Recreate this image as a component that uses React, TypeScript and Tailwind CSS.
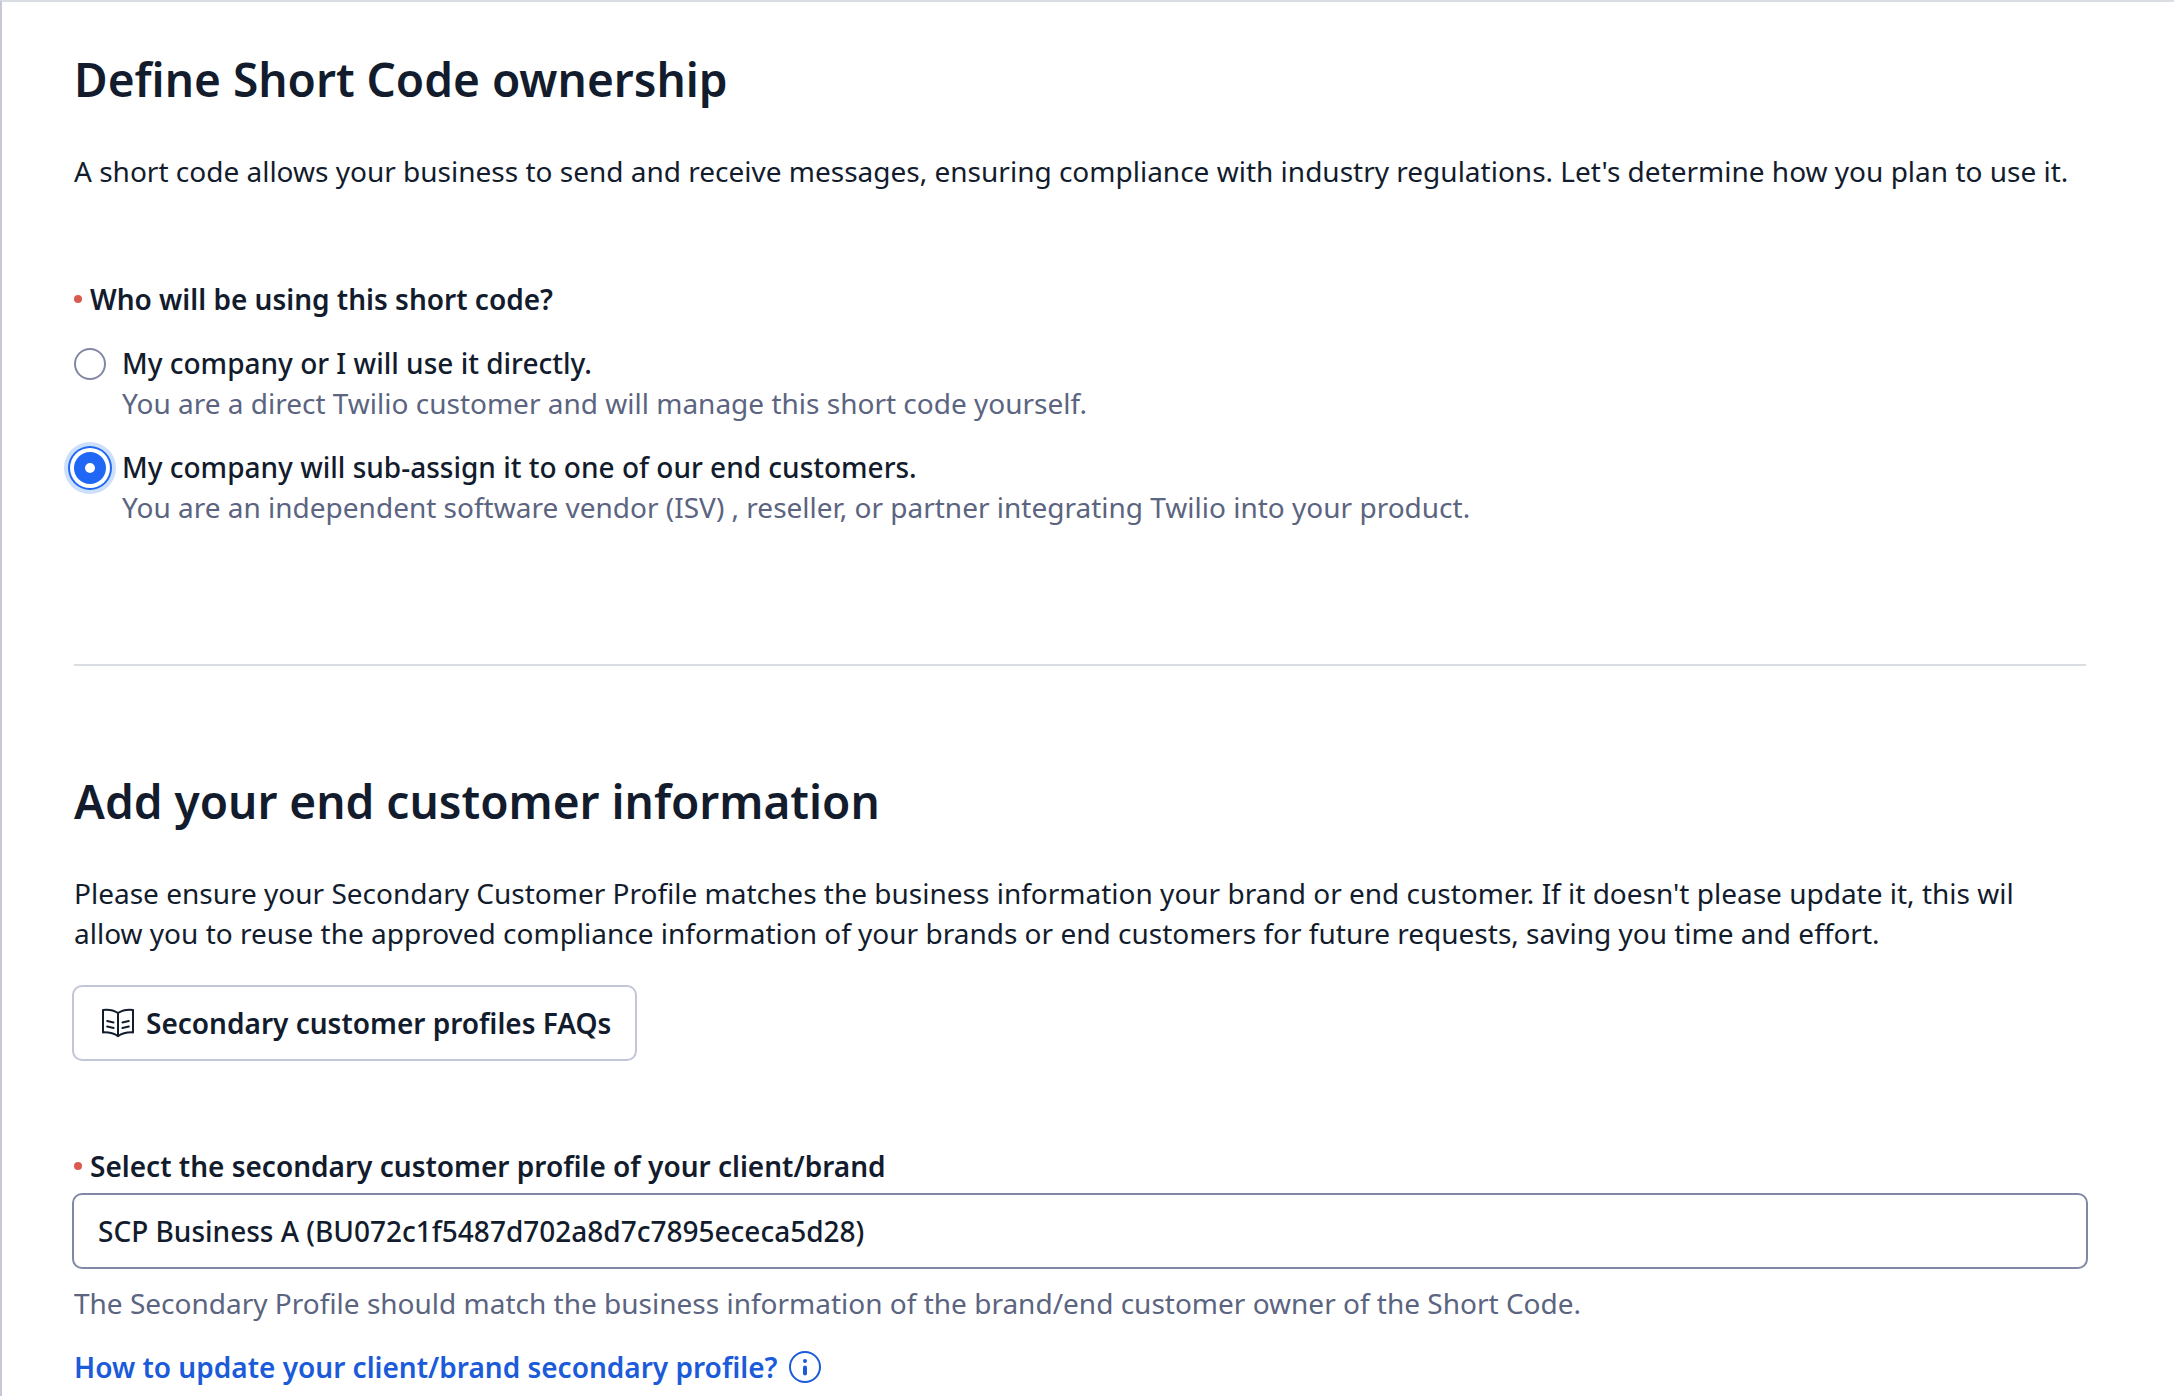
import { useState } from "react";
import type { ReactNode } from "react";

const owners = [
  {
    id: "direct",
    label: "My company or I will use it directly.",
    help: "You are a direct Twilio customer and will manage this short code yourself.",
  },
  {
    id: "isv",
    label: "My company will sub-assign it to one of our end customers.",
    help: "You are an independent software vendor (ISV) , reseller, or partner integrating Twilio into your product.",
  },
];

function RequiredDot() {
  return <span className="size-2 shrink-0 rounded-full bg-[#db5a4f]" />;
}

function Heading({ children }: { children: ReactNode }) {
  return (
    <h2 className="text-[46px] leading-[64px] font-semibold">{children}</h2>
  );
}

function BookIcon() {
  return (
    <svg
      className="size-10"
      viewBox="0 0 20 20"
      fill="none"
      stroke="currentColor"
      strokeLinecap="round"
      strokeLinejoin="round"
      aria-hidden="true"
    >
      <path d="M10 5C7.800 3.600 5 3.200 2.500 3.500v11.200c2.600-.1 5.300.3 7.500 1.900 2.200-1.600 4.900-2 7.500-1.900V3.500C15 3.200 12.200 3.600 10 5zM10 5v11.600" />
      <path d="M4.600 9l3.200.7M4.600 11.800l3.200.7M15.400 9l-3.200.7M15.400 11.800l-3.200.7" />
    </svg>
  );
}

function InfoIcon() {
  return (
    <svg className="size-8" viewBox="0 0 32 32" fill="none" aria-hidden="true">
      <circle cx="16" cy="16" r="15" stroke="currentColor" strokeWidth="2" />
      <circle cx="16" cy="10" r="2" fill="currentColor" />
      <path
        d="M16 16.500v6"
        stroke="currentColor"
        strokeWidth="4"
        strokeLinecap="round"
      />
    </svg>
  );
}

export default function App() {
  const [owner, setOwner] = useState("isv");

  return (
    <main className="min-h-screen border-t-2 border-l-2 border-t-[#dadde2] border-l-[#c6c8d8] bg-white pt-[45px] pr-[88px] pb-2 pl-[72px] font-['Noto_Sans',sans-serif] text-[28px] leading-[40px] text-[#121c2d]">
      <section>
        <Heading>Define Short Code ownership</Heading>
        <p className="mt-10">
          A short code allows your business to send and receive messages,
          ensuring compliance with industry regulations. Let's determine how you
          plan to use it.
        </p>

        <fieldset className="mt-[88px]">
          <legend className="flex items-center gap-2 font-semibold">
            <RequiredDot />
            Who will be using this short code?
          </legend>
          <div className="mt-6 flex flex-col gap-6">
            {owners.map((item) => (
              <div key={item.id} className="flex items-start gap-4">
                <input
                  type="radio"
                  id={item.id}
                  name="owner"
                  checked={owner === item.id}
                  onChange={() => setOwner(item.id)}
                  aria-describedby={`${item.id}-help`}
                  className="mt-[5px] size-8 shrink-0 appearance-none rounded-full border-2 border-[#8088a3] bg-white checked:border-[11px] checked:border-[#2067f5] checked:shadow-[0_0_0_4px_#fff,0_0_0_6px_#2067f5,0_0_0_10px_#cce0fb]"
                />
                <div>
                  <label htmlFor={item.id} className="block font-medium">
                    {item.label}
                  </label>
                  <p id={`${item.id}-help`} className="text-[#5b6480]">
                    {item.help}
                  </p>
                </div>
              </div>
            ))}
          </div>
        </fieldset>
      </section>

      <hr className="mt-[137px] border-t-2 border-[#dadde2]" />

      <section className="mt-[103px]">
        <Heading>Add your end customer information</Heading>
        <p className="mt-10">
          Please ensure your Secondary Customer Profile matches the business
          information your brand or end customer. If it doesn't please update
          it, this wil allow you to reuse the approved compliance information of
          your brands or end customers for future requests, saving you time and
          effort.
        </p>
        <div className="-mx-0.5 mt-8">
          <button
            type="button"
            className="flex items-center gap-2 rounded-[10px] border-2 border-[#c3c6d8] px-6 py-4 font-semibold"
          >
            <BookIcon />
            Secondary customer profiles FAQs
          </button>
        </div>

        <label
          htmlFor="profile"
          className="mt-[85px] flex items-center gap-2 font-semibold"
        >
          <RequiredDot />
          Select the secondary customer profile of your client/brand
        </label>
        <div className="-mx-0.5 mt-[7px]">
          <select
            id="profile"
            className="block w-full appearance-none rounded-[10px] border-2 border-[#8088a3] bg-white px-6 py-4 font-medium"
          >
            <option>SCP Business A (BU072c1f5487d702a8d7c7895ececa5d28)</option>
          </select>
        </div>
        <p className="mt-[14px] text-[#5b6480]">
          The Secondary Profile should match the business information of the
          brand/end customer owner of the Short Code.
        </p>
        <a
          href="#"
          className="mt-6 flex w-fit items-center gap-3 font-semibold text-[#1b5bd9]"
        >
          How to update your client/brand secondary profile?
          <InfoIcon />
        </a>
      </section>
    </main>
  );
}
